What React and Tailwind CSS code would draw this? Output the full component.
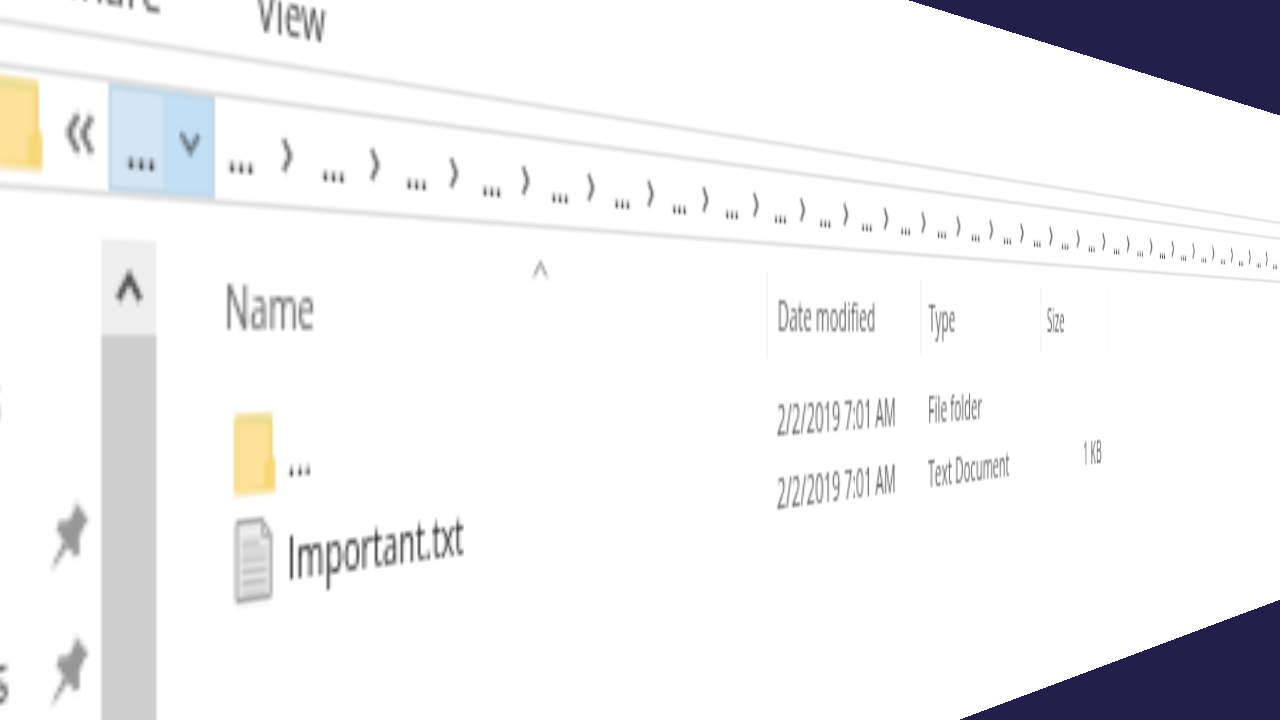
import React from 'react';

const places = [
  { name: 'Quick access', pinned: false },
  { name: 'Desktop', pinned: true },
  { name: 'Downloads', pinned: true },
];

const files = [
  { name: '...', modified: '2/2/2019 7:01 AM', type: 'File folder', size: '', folder: true },
  { name: 'Important.txt', modified: '2/2/2019 7:01 AM', type: 'Text Document', size: '1 KB', folder: false },
];

const crumbs = Array.from({ length: 28 }, (_, index) => index);

const FolderIcon = () => (
  <svg viewBox="0 0 14 16" className="w-[14px] h-4 shrink-0">
    <path d="M0.3 0.4h12.6v7.6l0.9 1v5.4H0.3z" fill="#f3d273" />
    <path d="M1.2 1.8h10.6v11.6l-10.6 0.5z" fill="#fee29a" />
    <path d="M1 0.6h11.6v1.5H1z" fill="#ecdf90" />
    <path d="M10.2 9.2l3.1-0.9v5.5h-3.1z" fill="#f6d974" />
  </svg>
);

const TextFileIcon = () => (
  <svg viewBox="0 0 14 16" className="w-[14px] h-4 shrink-0">
    <path d="M1 0.6h8.8l2.5 2.6v11.4H1z" fill="#f0f0f0" stroke="#a2a2a2" strokeWidth="1" />
    <path d="M9.6 0.6v2.8h2.7" fill="none" stroke="#a2a2a2" strokeWidth="0.8" />
    <path d="M2.6 4.2h6M2.6 6h8.2M2.6 7.8h8.2M2.6 9.6h8.2M2.6 11.4h8.2M2.6 13.1h8.2" stroke="#b4b4b4" strokeWidth="0.8" />
  </svg>
);

const PinIcon = () => (
  <svg viewBox="0 0 11 11" className="h-[11px] w-[11px] shrink-0">
    <path d="M6.9 0.3l3.6 3.2-1 0.6-1.7 2.1 0.2 2.6-1.2 0.5-2-1.8-4 3.2-0.3-0.4 3.2-3.8-2.1-2 0.8-1.2 2.7-0.1 1.5-1.6z" fill="#979797" />
  </svg>
);

const Chevron = ({ d, className, strokeWidth = 1.3 }) => (
  <svg viewBox="0 0 8 8" className={className}>
    <path d={d} fill="none" stroke="currentColor" strokeWidth={strokeWidth} />
  </svg>
);

const RibbonTabs = () => (
  <div className="flex h-[19px] items-center border-b border-[#e2e2e2] pb-px pl-[120px] text-[#4a4a4a]">
    {['Share', 'View'].map((tab) => (
      <button key={tab} className="px-[15px] leading-4">{tab}</button>
    ))}
  </div>
);

const AddressBar = () => (
  <nav aria-label="Address" className="mt-[6px] ml-24 flex h-5 items-stretch overflow-hidden border border-r-0 border-[#e0e0e0] text-[#3c3c3c]">
    <span className="flex items-center pb-px pl-5">
      <FolderIcon />
    </span>
    <button aria-label="Previous locations" className="flex w-[18px] shrink-0 items-center justify-center pl-[2px] text-[#707070]">
      <Chevron d="M3.6 1L1 4l2.6 3M7.4 1L4.8 4l2.6 3" className="h-2 w-2" />
    </button>
    {/* The first crumb is the pressed one */}
    {crumbs.map((index) => (
      <div
        key={index}
        className={`flex w-8 shrink-0 ${index === 0 ? 'bg-[#d3e6f6] outline -outline-offset-1 outline-[#c3d9e8]' : ''}`}
      >
        <button className={`w-4 text-left leading-4 font-semibold ${index === 0 ? 'pt-px pl-[5px]' : 'pb-px pl-1'}`}>...</button>
        <button
          aria-label="Show subfolders"
          className={`flex w-4 items-center justify-center ${index === 0 ? 'bg-[#c2dff6] text-[#66737e]' : 'text-[#6a6a6a]'}`}
        >
          {index === 0 ? (
            <Chevron d="M1.4 2.1l2.8 2.9 2.8-2.9" className="h-2 w-2" />
          ) : (
            <Chevron d="M2.7 1.2l2.4 2.8-2.4 2.8" className="h-2 w-2" />
          )}
        </button>
      </div>
    ))}
  </nav>
);

const NavPane = () => (
  <div className="flex w-[163px] shrink-0">
    <ul className="flex-1 pt-[15px] pb-13 text-[#3c3c3c]">
      {places.map((place) => (
        <li key={place.name} className="flex h-[22px] items-center pr-[3px]">
          <a href="#" className={`flex-1 ${place.pinned ? 'pl-[65px]' : 'pl-[55px] text-[#8a8a8a]'}`}>{place.name}</a>
          {place.pinned && <PinIcon />}
        </li>
      ))}
    </ul>
    <div className="flex w-4 flex-col">
      <button aria-label="Scroll up" className="flex h-4 items-center justify-center bg-[#efefef] text-[#505050]">
        <Chevron d="M0.8 6L4 2.2 7.2 6" className="h-2 w-2" strokeWidth={1.6} />
      </button>
      <div className="flex-1 bg-[#cfcfcf]" />
    </div>
  </div>
);

const FileTable = () => (
  <div className="flex-1">
    <table className="w-[591px] table-fixed text-left text-[#666666]">
      <thead>
        <tr className="h-[22px]">
          <th className="relative w-[273px] border-r border-[#f4f4f4] pl-[21px] font-normal">
            Name
            <Chevron d="M1 5.4l3-3 3 3" className="absolute top-[-2px] left-[141px] h-2 w-2" strokeWidth={0.9} />
          </th>
          <th className="w-[118px] border-r border-[#f4f4f4] pl-[7px] font-normal">Date modified</th>
          <th className="w-[119px] border-r border-[#f4f4f4] pl-[7px] font-normal">Type</th>
          <th className="w-[81px] border-r border-[#f4f4f4] pl-[7px] font-normal">Size</th>
        </tr>
      </thead>
      <tbody className="before:block before:h-[6px]">
        {files.map((file) => (
          <tr key={file.name} className="h-[19px]">
            <td className="pl-6">
              <div className="flex items-center gap-1 font-medium text-[#2e2e2e]">
                {file.folder ? <FolderIcon /> : <TextFileIcon />}
                <span>{file.name}</span>
              </div>
            </td>
            <td className="pl-[7px]">{file.modified}</td>
            <td className="pl-[7px]">{file.type}</td>
            <td className="pr-2 text-right">{file.size}</td>
          </tr>
        ))}
      </tbody>
    </table>
  </div>
);

const App = () => {
  return (
    <main className="h-screen w-full overflow-hidden bg-[#241e4a]">
      {/* The explorer window is a flat page turned away from the viewer */}
      <div className="w-full origin-top-left bg-white font-['Open_Sans','Noto_Sans',sans-serif] text-[11px] leading-4 [transform:matrix3d(5.184,0.874,0,0.0026089,0,8.3486,0,0,0,0,1,0,-621.9,-474.8,0,1)]">
        <div className="h-[29px]" />
        <RibbonTabs />
        <AddressBar />
        <div className="mt-[7px] flex">
          <NavPane />
          <FileTable />
        </div>
      </div>
    </main>
  );
};

export default App;
